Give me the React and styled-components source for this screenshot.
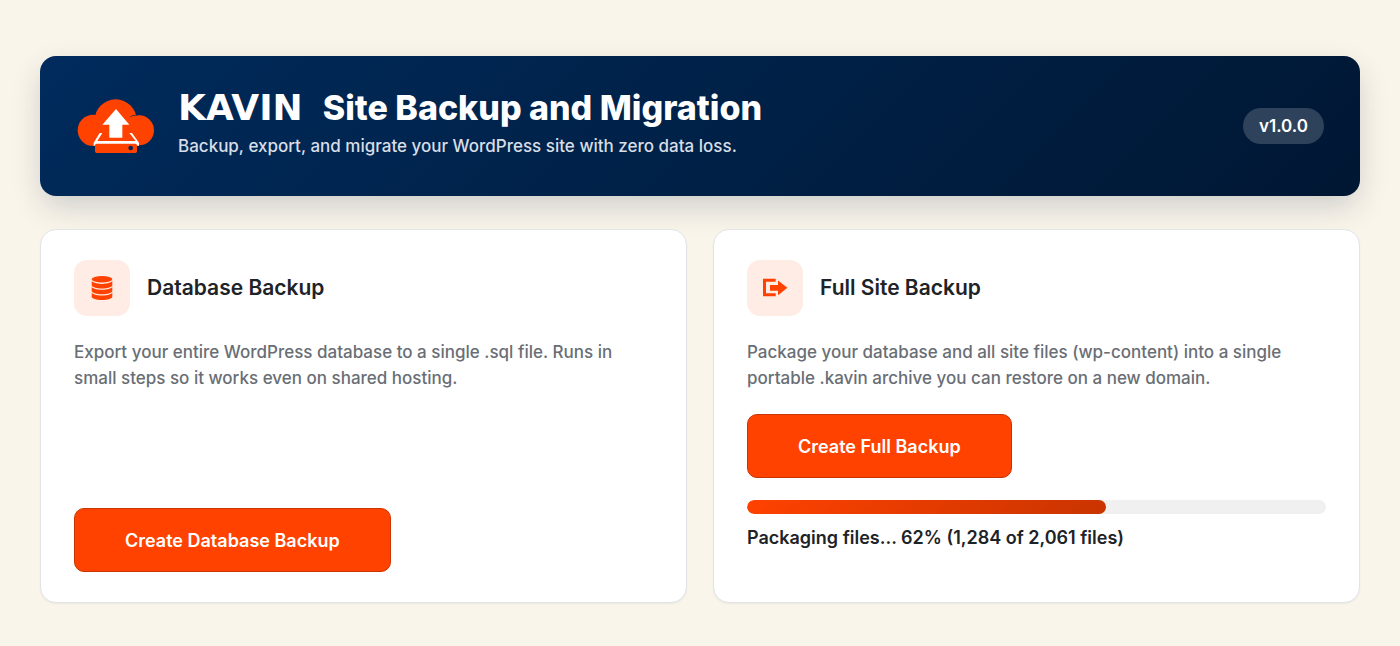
import React from 'react';
import styled, { createGlobalStyle } from 'styled-components';

const GlobalStyle = createGlobalStyle`
    * {
        box-sizing: border-box;
    }

    body {
        margin: 0;
        background: #faf5ea;
        color: #1d2327;
        font-family: Inter, "Liberation Sans", sans-serif;
    }

    h1, h2, p {
        margin: 0;
    }
`;

const Page = styled.main`
    padding: 56px 40px 43px;
`;

const Header = styled.header`
    display: flex;
    align-items: center;
    gap: 22px;
    padding: 32px 36px;
    border-radius: 16px;
    background: linear-gradient(135deg, #002b5c 0%, #001733 100%);
    box-shadow: 0 12px 32px -3px rgba(0, 32, 70, 0.2);
`;

const Logo = styled.svg`
    flex: none;
    width: 80px;
    height: 60px;
`;

const Heading = styled.div`
    flex: 1;
    padding-bottom: 4px;
`;

const Title = styled.h1`
    display: flex;
    align-items: center;
    gap: 20px;
    color: #fff;
    font-size: 34px;
    font-weight: 800;
    line-height: 40px;
`;

const Brand = styled.span`
    font-family: "DejaVu Sans", sans-serif;
    font-size: 36px;
`;

const Tagline = styled.p`
    margin-top: 4px;
    color: #d8dee6;
    font-size: 17px;
    font-weight: 500;
    line-height: 28px;
`;

const Version = styled.span`
    padding: 0 16px;
    border-radius: 18px;
    background: rgba(255, 255, 255, 0.18);
    color: #fff;
    font-size: 17px;
    font-weight: 600;
    line-height: 36px;
`;

const Cards = styled.div`
    display: grid;
    grid-template-columns: 1fr 1fr;
    gap: 26px;
    margin-top: 33px;
`;

const CardBox = styled.section`
    display: flex;
    flex-direction: column;
    align-items: flex-start;
    padding: 30px 33px;
    border: 1px solid #e2e4ea;
    border-radius: 16px;
    background: #fff;
    box-shadow: 0 1px 2px rgba(0, 20, 51, 0.06);
`;

const CardHead = styled.div`
    display: flex;
    align-items: center;
    gap: 17px;

    h2 {
        font-size: 21px;
        font-weight: 600;
        line-height: 28px;
    }
`;

const IconTile = styled.span`
    display: flex;
    align-items: center;
    justify-content: center;
    width: 56px;
    height: 56px;
    border-radius: 13px;
    background: #ffece5;

    svg {
        width: 28px;
        height: 28px;
        fill: #ff4200;
    }
`;

const Description = styled.p`
    margin: 23px 0;
    color: #696e75;
    font-size: 17px;
    font-weight: 500;
    line-height: 26px;
`;

const Button = styled.button`
    margin-top: ${props => props.$bottom ? 'auto' : '0'};
    height: 64px;
    padding: 0 50px;
    border: 1px solid #c93400;
    border-radius: 10px;
    background: #ff4200;
    color: #fff;
    font-family: inherit;
    font-size: 18px;
    font-weight: 600;
    cursor: pointer;
`;

const Track = styled.div`
    width: 100%;
    height: 14px;
    margin-top: 22px;
    border-radius: 7px;
    background: #f0f0f1;
    overflow: hidden;
`;

const Fill = styled.div`
    height: 100%;
    border-radius: 7px;
    background: linear-gradient(135deg, #ff4200, #c93400);
`;

const Status = styled.p`
    min-height: 47px;
    margin-top: 11px;
    font-size: 18px;
    font-weight: 600;
    line-height: 26px;
`;

function CloudLogo() {
    return (
        <Logo viewBox="48 48 240 180" aria-hidden="true">
            <g fill="#ff4200">
                <circle cx="100" cy="151" r="47" />
                <circle cx="167" cy="121" r="63" />
                <circle cx="237" cy="151" r="45" />
                <rect x="100" y="140" width="137" height="57" />
            </g>
            <path d="M207 113c8-7 17-10 28-8l-7-8 12-6v14c-12-1-21 2-33 8z" fill="#002756" />
            <path d="M168 87l40 47h-21v39h-39v-39h-21z" fill="#fff" />
            <path d="M119 159h8l-15 24h115l-19-24h8l21 29v9H101v-9z" fill="#fff" />
            <rect x="105" y="191" width="126" height="28" rx="5" fill="#ff4200" />
            <circle cx="212" cy="204" r="7" fill="#002756" />
        </Logo>
    )
}

function DatabaseIcon() {
    const band = 'c0 1.8 4.6 3.3 10.3 3.3s10.3-1.5 10.3-3.3v4.6c0 1.8-4.6 3.3-10.3 3.3S3.7';
    return (
        <svg viewBox="0 0 28 28" aria-hidden="true">
            <ellipse cx="14" cy="5.2" rx="10.3" ry="3.2" />
            <path d={`M3.7 6.6${band} 13 3.7 11.2z`} />
            <path d={`M3.7 12.4${band} 18.8 3.7 17z`} />
            <path d={`M3.7 18.2${band} 24.6 3.7 22.8z`} />
        </svg>
    )
}

function ExportIcon() {
    return (
        <svg viewBox="0 0 28 28" aria-hidden="true">
            <path d="M2 4.7h12.7v3H5v11.6h9.7v3H2z" />
            <path d="M9 10.9h8V6.4l9.4 7.4-9.4 7.5v-4.6H9z" />
        </svg>
    )
}

function Card({icon, title, text, children}) {
    return (
        <CardBox>
            <CardHead>
                <IconTile>{icon}</IconTile>
                <h2>{title}</h2>
            </CardHead>
            <Description>{text}</Description>
            {children}
        </CardBox>
    )
}

function App() {
    const percent = 62;
    return (
        <Page>
            <GlobalStyle />
            <Header>
                <CloudLogo />
                <Heading>
                    <Title><Brand>KAVIN</Brand> <span>Site Backup and Migration</span></Title>
                    <Tagline>Backup, export, and migrate your WordPress site with zero data loss.</Tagline>
                </Heading>
                <Version>v1.0.0</Version>
            </Header>
            <Cards>
                <Card
                    icon={<DatabaseIcon />}
                    title="Database Backup"
                    text="Export your entire WordPress database to a single .sql file. Runs in small steps so it works even on shared hosting."
                >
                    <Button type="button" $bottom>Create Database Backup</Button>
                </Card>
                <Card
                    icon={<ExportIcon />}
                    title="Full Site Backup"
                    text="Package your database and all site files (wp-content) into a single portable .kavin archive you can restore on a new domain."
                >
                    <Button type="button">Create Full Backup</Button>
                    <Track role="progressbar" aria-label="Full backup" aria-valuenow={percent} aria-valuemin={0} aria-valuemax={100}>
                        <Fill style={{ width: `${percent}%` }} />
                    </Track>
                    <Status>Packaging files... {percent}% (1,284 of 2,061 files)</Status>
                </Card>
            </Cards>
        </Page>
    )
}

export default App;
